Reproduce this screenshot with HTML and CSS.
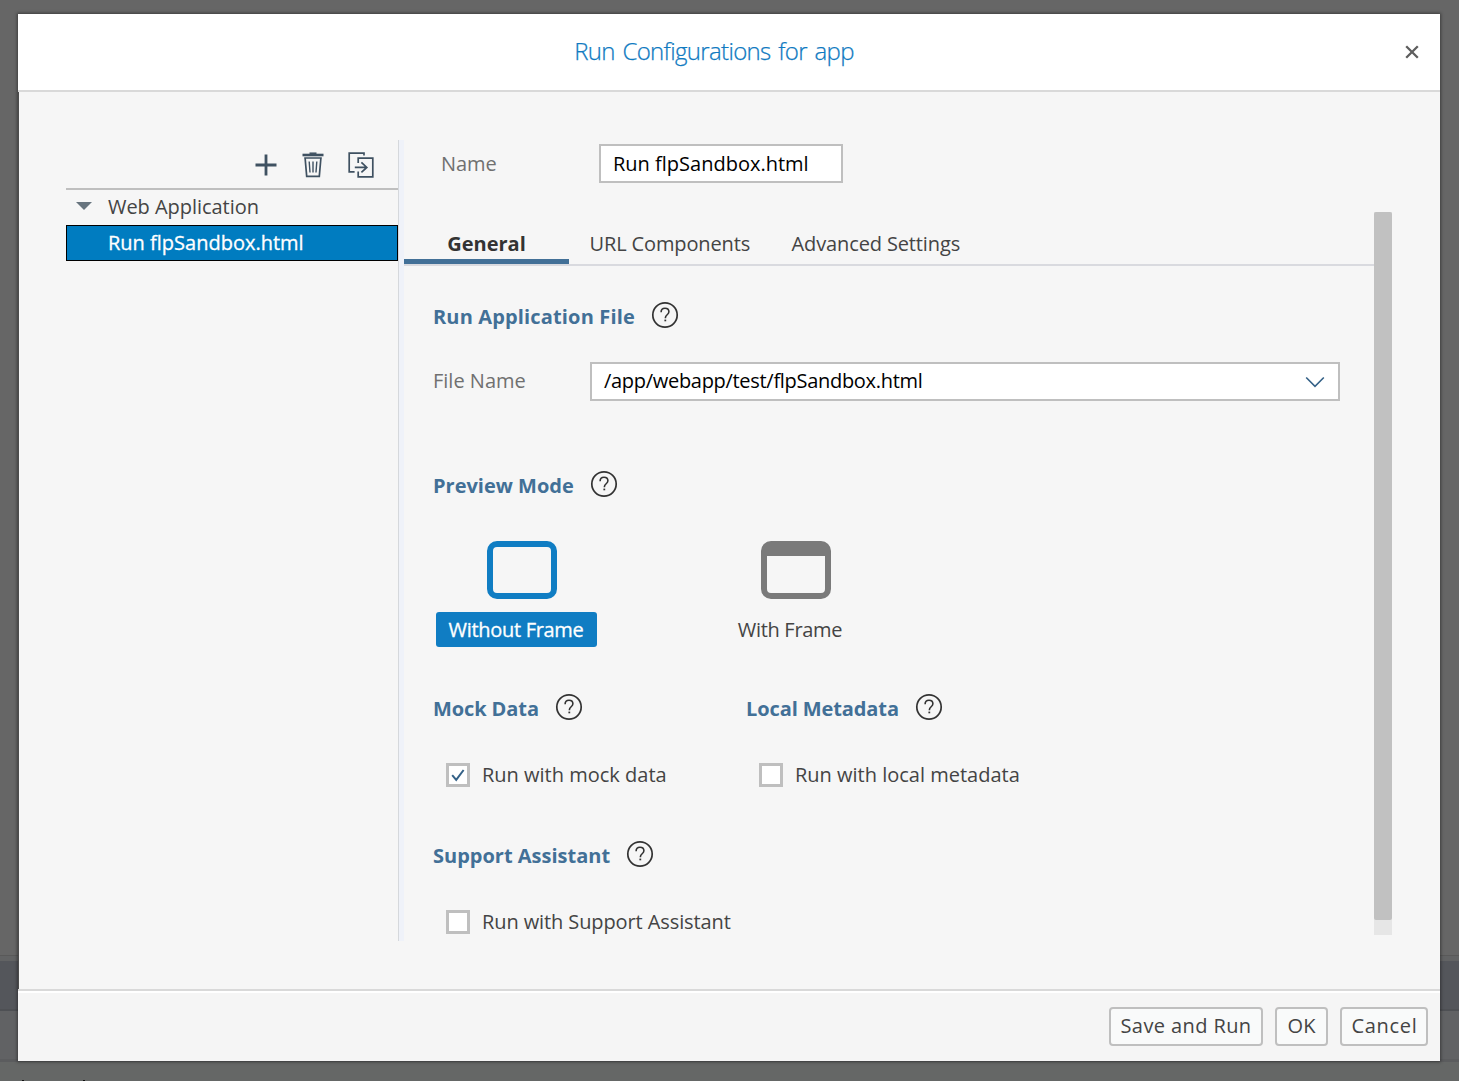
FILE: index.html
```html
<!DOCTYPE html>
<html lang="en">
<head>
<meta charset="utf-8">
<title>Run Configurations for app</title>
<link rel="stylesheet" href="styles.css">
</head>
<body>
<svg width="0" height="0" class="defs" aria-hidden="true">
  <symbol id="help" viewBox="0 0 28 28">
    <circle cx="14" cy="14" r="12.2" fill="none" stroke="#333" stroke-width="1.7"/>
    <path d="M10.1 11.2c0-2.5 1.6-3.9 3.9-3.9s3.9 1.4 3.9 3.5c0 2.9-3.5 3-3.5 5.9v.5" fill="none" stroke="#333" stroke-width="1.6"/>
    <rect x="13.4" y="18.6" width="1.8" height="1.7" fill="#333"/>
  </symbol>
</svg>
<div class="backdrop">
  <div class="band band-edge"></div>
  <div class="band band-dark"></div>
  <div class="band band-mid"></div>
  <div class="band band-bottom"><i></i><i></i></div>
</div>
<div class="dialog">
  <header class="header">
    <h1>Run Configurations for app</h1>
    <svg class="close" width="14" height="14" viewBox="0 0 14 14"><path d="M1.2 1.2 12.8 12.8M12.8 1.2 1.2 12.8" stroke="#5e5e5e" stroke-width="2.3"/></svg>
  </header>
  <div class="body">
    <aside class="sidebar">
      <div class="toolbar">
        <svg width="22" height="22" viewBox="0 0 22 22"><path d="M11 .5v21M.5 11h21" stroke="#3f5161" stroke-width="2.8"/></svg>
        <svg width="22" height="26" viewBox="0 0 22 26" fill="none" stroke="#3f5161"><path d="M.5 3h21" stroke-width="2.6"/><path d="M7.5 1.2h7" stroke-width="1.5"/><path d="M2.2 6h17.6M3.1 6l1.6 18.3h12.6L18.9 6" stroke-width="1.7"/><path d="M7.2 9.5l.8 11M11 9.5v11M14.8 9.5l-.8 11" stroke-width="1.4"/></svg>
        <svg width="26" height="26" viewBox="0 0 26 26" fill="none" stroke="#3f5161" stroke-width="1.7"><path d="M16 3.4V1.2H1.2v18.6h5.4"/><path d="M10.2 11V6.2h14.6v18.6H10.2v-5.2"/><path d="M6.8 15.4h12M13.4 10.4l5.4 5-5.4 5"/></svg>
      </div>
      <div class="row"><span class="arrow"></span>Web Application</div>
      <div class="row selected">Run flpSandbox.html</div>
    </aside>
    <main class="main">
      <div class="name-row"><label>Name</label><div class="input">Run flpSandbox.html</div></div>
      <div class="scroller">
        <div class="content">
          <nav class="tabs">
            <span class="tab active">General</span>
            <span class="tab url">URL Components</span>
            <span class="tab advanced">Advanced Settings</span>
          </nav>
          <section class="file">
            <h2 class="wide">Run Application File<svg class="help"><use href="#help"/></svg></h2>
            <div class="field">
              <label>File Name</label>
              <div class="input select"><span>/app/webapp/test/flpSandbox.html</span>
                <svg width="20" height="12" viewBox="0 0 20 12"><path d="M1.2 1.5 10 10.3 18.8 1.5" fill="none" stroke="#346187" stroke-width="1.6"/></svg>
              </div>
            </div>
          </section>
          <section class="preview">
            <h2>Preview Mode<svg class="help"><use href="#help"/></svg></h2>
            <div class="modes">
              <div class="mode chosen">
                <div class="frame"></div>
                <span>Without Frame</span>
              </div>
              <div class="mode framed">
                <div class="frame"></div>
                <span>With Frame</span>
              </div>
            </div>
          </section>
          <div class="pair">
            <section>
              <h2 class="snug">Mock Data<svg class="help"><use href="#help"/></svg></h2>
              <div class="check"><i><svg width="14" height="14" viewBox="0 0 14 14"><path d="M1.2 7.2 5.2 11.8 12.6 2" fill="none" stroke="#346187" stroke-width="2"/></svg></i>Run with mock data</div>
            </section>
            <section>
              <h2 class="snug">Local Metadata<svg class="help"><use href="#help"/></svg></h2>
              <div class="check"><i></i>Run with local metadata</div>
            </section>
          </div>
          <section class="support">
            <h2>Support Assistant<svg class="help"><use href="#help"/></svg></h2>
            <div class="check tight"><i></i>Run with Support Assistant</div>
          </section>
        </div>
        <div class="scrollbar"><div class="thumb"></div></div>
      </div>
    </main>
  </div>
  <footer class="footer">
    <button class="save">Save and Run</button>
    <button class="ok">OK</button>
    <button class="cancel">Cancel</button>
  </footer>
</div>
</body>
</html>
```
FILE: styles.css
```css
* { box-sizing: border-box; }
body {
  margin: 0;
  width: 1459px;
  height: 1081px;
  overflow: hidden;
  position: relative;
  background: #666;
  color: #444;
  font: 20px/28px "Open Sans", "Noto Sans", sans-serif;
}
h1, h2 { margin: 0; }
svg { display: block; flex: none; }
.defs { position: absolute; }

/* dimmed page behind the dialog */
.backdrop { position: absolute; inset: 0; padding-top: 955px; }
.band-edge { height: 6px; background: #626364; border-top: 1px solid #595959; }
.band-dark { height: 50px; background: #54565b; border-bottom: 2px solid #4e5054; }
.band-mid { height: 51px; background: #616264; border-bottom: 3px solid #5b5c5e; }
.band-bottom { height: 19px; background: #656766; display: flex; align-items: flex-end; padding-left: 22px; gap: 59px; }
.band-bottom i { width: 2px; height: 1px; background: #111; }

.dialog {
  position: absolute;
  left: 18px;
  top: 14px;
  width: 1422px;
  height: 1047px;
  display: flex;
  flex-direction: column;
  background: #f5f5f5;
  box-shadow: 0 0 3px 1px rgba(0, 0, 0, .4);
}
.header {
  height: 78px;
  display: flex;
  align-items: center;
  background: #fff;
  border-bottom: 2px solid #d9d9d9;
  padding: 0 21px 0 0;
}
.header h1 {
  flex: 1;
  padding: 0 0 2px 5px;
  text-align: center;
  font-size: 24px;
  font-weight: 300;
  letter-spacing: -.65px;
  word-spacing: 2px;
  color: #0f7ac1;
  -webkit-text-stroke: .25px #0f7ac1;
}
.body {
  flex: 1;
  display: flex;
  padding: 48px 48px 48px 47px;
  background: #f6f6f6;
  border-left: 1px solid #4c4c4c;
}
.sidebar { width: 332px; }
.toolbar {
  height: 50px;
  display: flex;
  justify-content: flex-end;
  align-items: center;
  gap: 25px;
  padding: 1px 24px 0 0;
  border-bottom: 2px solid #bfbfbf;
}
.toolbar svg:nth-child(2) { margin-right: -1px; }
.row { height: 35px; display: flex; align-items: center; padding: 0 0 2px 10px; color: #444; letter-spacing: -.04px; }
.arrow { border: 8px solid transparent; border-top-color: #67747e; border-bottom: 0; margin: -2px 16px 0 0; }
.row.selected { height: 36px; padding: 0 0 0 41px; background: #007cc0; border: 1px solid #000; color: #fff; letter-spacing: 0; -webkit-text-stroke: .3px #fff; }

.main {
  flex: 1;
  min-width: 0;
  border-left: 1px solid #d5d8dc;
  box-shadow: inset 5px 0 #eff2f9;
  padding: 4px 0 0 5px;
  display: flex;
  flex-direction: column;
}
label { color: #707070; }
.name-row { display: flex; align-items: center; height: 39px; padding-left: 37px; }
.name-row label { width: 158px; letter-spacing: -.1px; }
.input {
  width: 244px;
  height: 39px;
  display: flex;
  align-items: center;
  background: #fff;
  border: 2px solid #bfbfbf;
  padding: 0 12px;
  color: #000;
}
.scroller { margin-top: 29px; height: 723px; display: flex; }
.content { width: 970px; }
.scrollbar { width: 18px; background: #e6e6e6; }
.thumb { height: 708px; background: #c1c1c1; border-radius: 2px; }
.tabs { height: 54px; display: flex; border-bottom: 2px solid #d9dadf; }
.tab { padding-top: 17px; line-height: 30px; white-space: nowrap; }
.tab.active { width: 165px; text-align: center; font-weight: 700; color: #333; border-bottom: 5px solid #427097; }
.tab.url { margin-left: 20.6px; width: 202px; letter-spacing: -.14px; }
.tab.advanced { letter-spacing: -.13px; }
section h2 {
  height: 28px;
  display: flex;
  align-items: center;
  font-size: 20px;
  line-height: 28px;
  color: #427097;
}
h2.wide { letter-spacing: .15px; }
h2.snug { letter-spacing: -.1px; }
.help { width: 28px; height: 28px; margin: -4px 0 0 16px; }
.file { padding: 37px 0 0 29px; }
.field { display: flex; margin-top: 31px; height: 39px; }
.field label { width: 157px; line-height: 38px; }
.select { width: 750px; justify-content: space-between; padding-bottom: 1px; }
.select span { letter-spacing: -.3px; }
.select svg { position: relative; top: 1px; margin-right: 1px; }
.preview { padding: 71px 0 0 29px; }
.modes { display: flex; margin-top: 41px; padding-left: 3px; }
.mode { width: 161px; display: flex; flex-direction: column; align-items: center; }
.mode span { margin-top: 13px; height: 35px; line-height: 35px; letter-spacing: -.3px; color: #444; }
.frame { width: 70px; height: 58px; border: 6px solid #7a7a7a; border-radius: 10px; }
.chosen .frame { border-color: #107dc3; margin-left: 11px; }
.chosen span { width: 161px; padding-right: 1px; text-align: center; background: #107dc3; border-radius: 3px; color: #fff; -webkit-text-stroke: .3px #fff; }
.framed { margin-left: 112.5px; }
.framed .frame { border-top-width: 15px; margin-left: 12px; }
.pair { display: grid; grid-template-columns: 313px 1fr; padding: 48px 0 0 29px; }
.check { display: flex; align-items: center; height: 28px; margin-top: 38px; padding-left: 14px; }
.check i { width: 24px; height: 24px; background: #fff; border: 3px solid #bfbfbf; margin: 0 12px 0 -1px; padding: 2px; }
.tight { letter-spacing: -.1px; }
.support { padding: 53px 0 0 29px; }

.footer {
  height: 72px;
  display: flex;
  justify-content: flex-end;
  gap: 12px;
  padding: 16px 12px 0 0;
  border-top: 2px solid #d9d9d9;
  box-shadow: inset 0 2px #fff;
}
.footer button {
  height: 39px;
  border: 2px solid #bfbfbf;
  border-radius: 4px;
  background: #f9fafa;
  color: #444;
  font: inherit;
  padding: 0 0 2px;
}
.save { width: 154px; }
.footer .save { letter-spacing: .4px; }
.ok { width: 53px; }
.cancel { width: 88px; }
.footer .cancel { letter-spacing: .7px; padding-left: 1px; }
```
